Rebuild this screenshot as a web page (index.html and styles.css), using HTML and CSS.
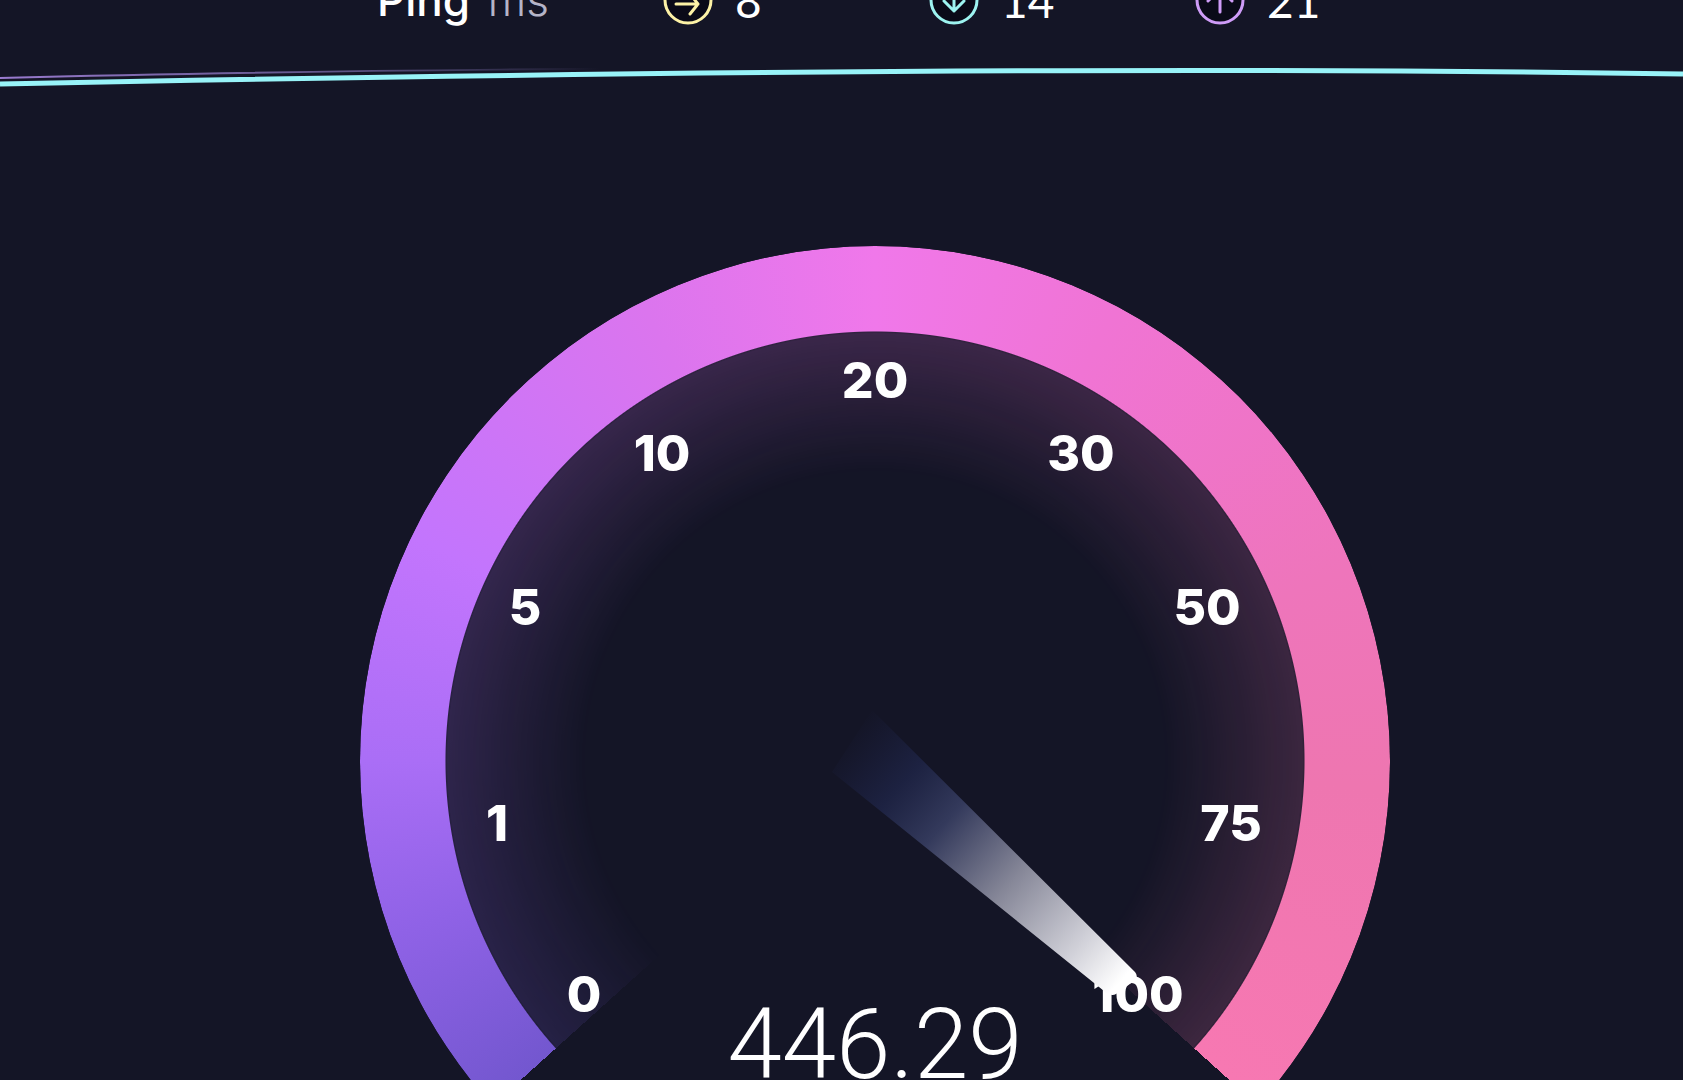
FILE: index.html
```html
<!DOCTYPE html>
<html lang="en">
<head>
    <meta charset="UTF-8">
    <meta name="viewport" content="width=device-width, initial-scale=1.0">
    <title>Speed Test</title>
    <link rel="stylesheet" href="styles.css">
</head>
<body>
    <header class="ping">
        <div class="ping-label">Ping <span class="unit">ms</span></div>
        <div class="ping-item idle">
            <svg viewBox="0 0 50 50"><circle cx="25" cy="25" r="23"/><path d="M13 29H35M27 39L35 29L27 19"/></svg>
            <span>8</span>
        </div>
        <div class="ping-item down">
            <svg viewBox="0 0 50 50"><circle cx="25" cy="25" r="23"/><path d="M25 12V36M15 26L25 36L35 26"/></svg>
            <span>14</span>
        </div>
        <div class="ping-item up">
            <svg viewBox="0 0 50 50"><circle cx="25" cy="25" r="23"/><path d="M25 37V14M13 26L25 14L37 26"/></svg>
            <span>21</span>
        </div>
    </header>

    <svg class="graph" viewBox="0 0 1683 40" preserveAspectRatio="none">
        <defs>
            <linearGradient id="fade">
                <stop offset="0" stop-color="#9a7bd0"/>
                <stop offset="0.35" stop-color="#6f629c" stop-opacity="0.8"/>
                <stop offset="0.6" stop-color="#6f629c" stop-opacity="0"/>
            </linearGradient>
        </defs>
        <path class="graph-up" d="M0 18C300 10 700 7 1000 8"/>
        <path class="graph-down" d="M0 24C500 14 1130 5 1683 14"/>
    </svg>

    <main class="gauge">
        <div class="dial">
            <div class="glow"></div>
            <div class="ring"></div>
            <svg class="face" viewBox="0 0 1030 1030">
                <defs>
                    <linearGradient id="needle" gradientUnits="userSpaceOnUse" x1="485" y1="490" x2="760" y2="736">
                        <stop offset="0" stop-color="#1c2144" stop-opacity="0"/>
                        <stop offset="0.2" stop-color="#1f2548" stop-opacity="0.8"/>
                        <stop offset="0.36" stop-color="#343a5c"/>
                        <stop offset="0.6" stop-color="#868798"/>
                        <stop offset="0.85" stop-color="#d0d0d8"/>
                        <stop offset="1" stop-color="#ffffff"/>
                    </linearGradient>
                </defs>
                <g class="scale">
                    <text x="224" y="766">0</text>
                    <text x="137" y="595">1</text>
                    <text x="165" y="379">5</text>
                    <text x="302" y="225">10</text>
                    <text x="515" y="152">20</text>
                    <text x="721" y="225">30</text>
                    <text x="847" y="379">50</text>
                    <text x="871" y="595">75</text>
                    <text x="778" y="766">100</text>
                </g>
                <path fill="url(#needle)" d="M472 526L512 464L775 726Q779 731 774 735L756 748Q751 751 744 745Z"/>
                <text class="speed" x="515" y="832">446.29</text>
            </svg>
        </div>
    </main>
</body>
</html>
```
FILE: styles.css
```css
body {
    margin: 0;
    height: 100vh;
    overflow: hidden;
    background-color: #141526;
    color: #fff;
    font-family: Inter, "Liberation Sans", sans-serif;
}
.ping {
    display: grid;
    grid-template-columns: 286px 266px 266px 266px;
    align-items: center;
    height: 64px;
    margin-top: -32px;
    padding-left: 377px;
}
.ping-label {
    font-size: 44px;
    font-weight: 500;
}
.unit {
    margin-left: 6px;
    font-weight: 300;
    color: #b5b4c8;
}
.ping-item {
    display: flex;
    align-items: center;
    gap: 22px;
    font-family: Lato, sans-serif;
    font-size: 46px;
}
.ping-item svg {
    width: 50px;
    height: 50px;
    fill: none;
    stroke: currentColor;
    stroke-width: 3;
    stroke-linecap: round;
    stroke-linejoin: round;
}
.ping-item circle {
    fill: #0a0a18;
}
.ping-item span {
    color: #fff;
}
.idle {
    color: #fdf2a6;
}
.down {
    color: #9df3f0;
}
.up {
    color: #cf9cf8;
}
.graph {
    display: block;
    width: 100%;
    height: 40px;
    margin-top: 28px;
    fill: none;
}
.graph-down {
    stroke: #98f3f8;
    stroke-width: 5;
}
.graph-up {
    stroke: url(#fade);
    stroke-width: 2;
}
.gauge {
    display: flex;
    justify-content: center;
    margin-top: 146px;
    padding-left: 66px;
}
.dial {
    display: grid;
    flex: none;
    width: 100%;
    max-width: 1030px;
    aspect-ratio: 1;
}
.ring, .glow, .face {
    grid-area: 1 / 1;
}
.ring, .glow {
    border-radius: 50%;
    background: conic-gradient(from 228deg,
        #7357cf 0deg,
        #8f62e6 22deg,
        #aa6ef6 42deg,
        #c375fd 68deg,
        #db75ee 105deg,
        #f078ea 132deg,
        #f074d4 160deg,
        #ee75bb 200deg,
        #ee76b0 225deg,
        #f778b2 264deg,
        transparent 264deg);
}
.ring {
    -webkit-mask: radial-gradient(closest-side, transparent 83.3%, #000 83.5%);
    mask: radial-gradient(closest-side, transparent 83.3%, #000 83.5%);
}
.glow {
    -webkit-mask: radial-gradient(closest-side, transparent 56%, rgba(0, 0, 0, 0.08) 68%, rgba(0, 0, 0, 0.18) 83%, transparent 84%);
    mask: radial-gradient(closest-side, transparent 56%, rgba(0, 0, 0, 0.08) 68%, rgba(0, 0, 0, 0.18) 83%, transparent 84%);
}
.face {
    z-index: 1;
    width: 100%;
    fill: #fff;
    text-anchor: middle;
}
.scale {
    font-size: 50px;
    font-weight: 800;
}
.speed {
    font-family: Roboto, sans-serif;
    font-size: 98px;
    font-weight: 300;
}
```
